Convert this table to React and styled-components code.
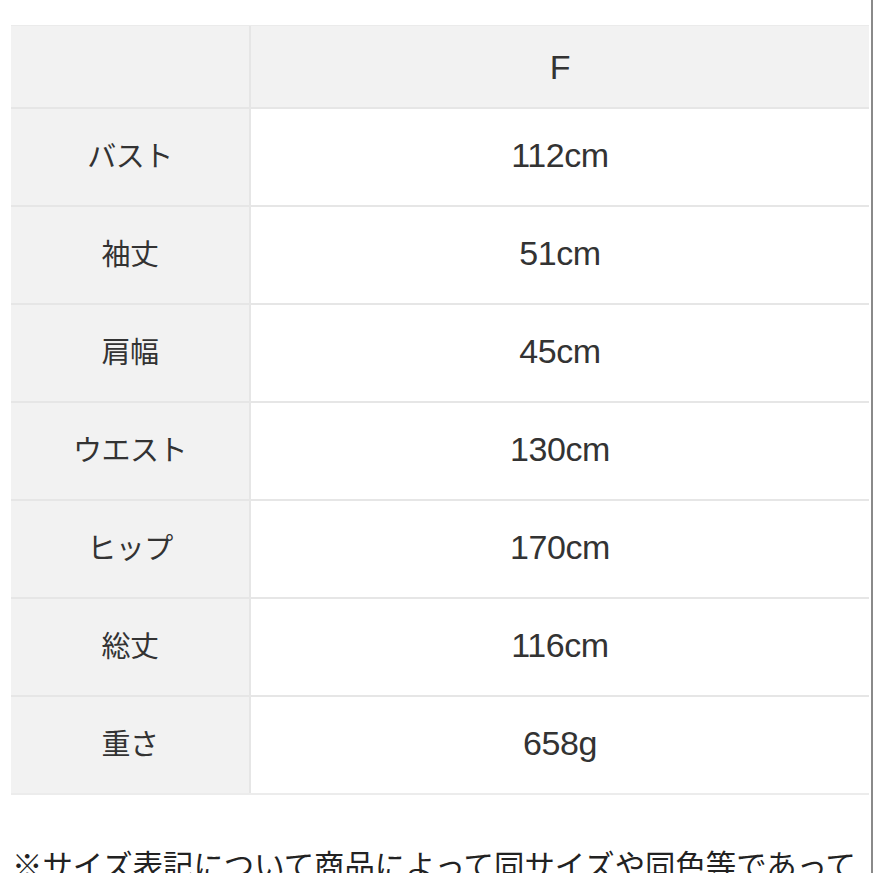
import React from "react";
import styled, { createGlobalStyle } from "styled-components";

const Global = createGlobalStyle`
  html, body { margin: 0; padding: 0; background: #ffffff; }
  body { overflow: hidden; }
`;

const Page = styled.div`
  box-sizing: border-box;
  width: 873px;
  height: 873px;
  padding: 25px 2px 0 11px;
  border-right: 2px solid #8a8a8a;
  background: #ffffff;
  overflow: hidden;
`;

const Table = styled.div`
  display: grid;
  grid-template-columns: 238px 1fr;
  grid-template-rows: 81px repeat(7, 96px);
  gap: 2px;
  background: #e6e6e6;
  border-top: 1px solid #ebebeb;
  border-bottom: 2px solid #ececec;
`;

const Cell = styled.div`
  box-sizing: border-box;
  display: flex;
  align-items: center;
  justify-content: center;
  padding-bottom: ${(p) => (p.$head ? "0" : "5px")};
  background: ${(p) => (p.$shaded ? "#f2f2f2" : "#ffffff")};
  color: #333333;
`;

const Label = styled.span`
  font-family: "Noto Sans CJK JP", "Noto Sans", sans-serif;
  font-size: 29px;
  line-height: 1;
  letter-spacing: -0.5px;
`;

const Value = styled.span`
  font-family: "Liberation Sans", Arial, sans-serif;
  font-size: 34px;
  line-height: 1;
  letter-spacing: -0.4px;
`;

const Note = styled.p`
  margin: 54px 0 0 1px;
  font-family: "Noto Sans CJK JP", sans-serif;
  font-size: 30.4px;
  line-height: 31px;
  color: #222222;
  white-space: nowrap;
`;

const rows = [
  ["バスト", "112cm"],
  ["袖丈", "51cm"],
  ["肩幅", "45cm"],
  ["ウエスト", "130cm"],
  ["ヒップ", "170cm"],
  ["総丈", "116cm"],
  ["重さ", "658g"],
];

export default function App() {
  return (
    <>
      <Global />
      <Page>
        <Table>
          <Cell $shaded $head />
          <Cell $shaded $head>
            <Value>F</Value>
          </Cell>
          {rows.map(([label, value]) => (
            <React.Fragment key={label}>
              <Cell $shaded>
                <Label>{label}</Label>
              </Cell>
              <Cell>
                <Value>{value}</Value>
              </Cell>
            </React.Fragment>
          ))}
        </Table>
        <Note>※サイズ表記について商品によって同サイズや同色等であって</Note>
      </Page>
    </>
  );
}
